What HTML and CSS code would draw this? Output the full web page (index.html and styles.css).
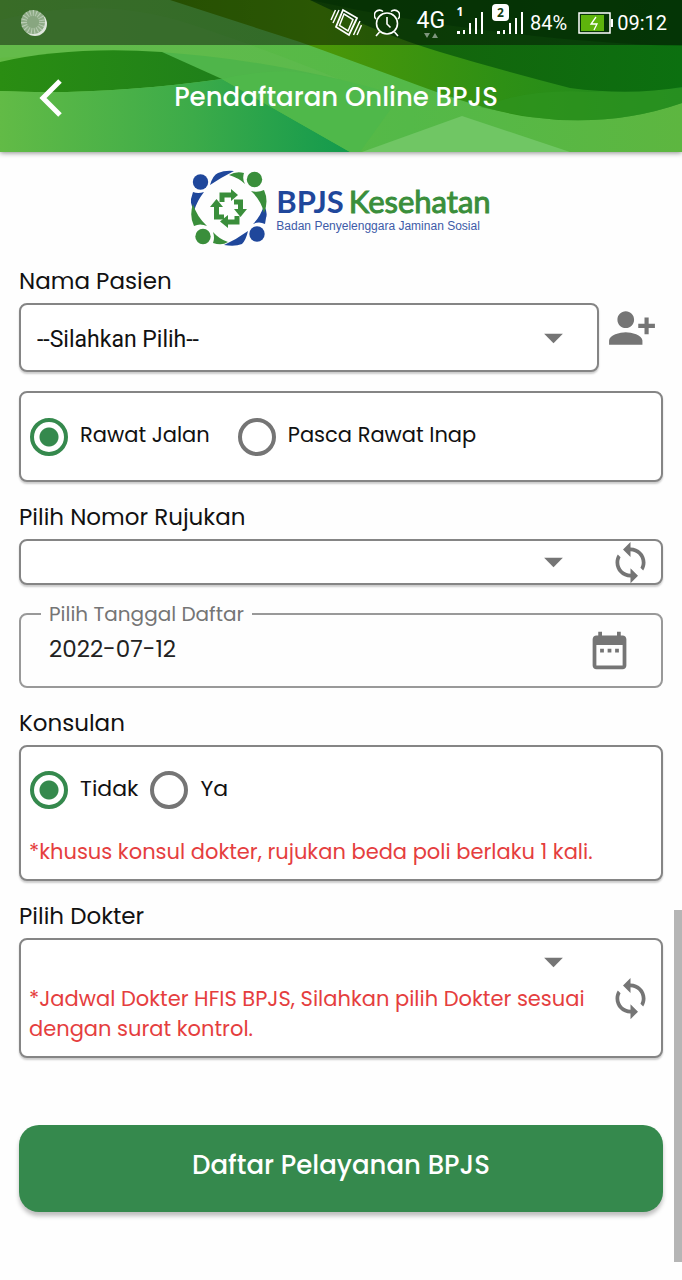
FILE: index.html
```html
<!DOCTYPE html>
<html lang="id">
<head>
<meta charset="utf-8">
<meta name="viewport" content="width=device-width, initial-scale=1">
<title>Pendaftaran Online BPJS</title>
<link rel="stylesheet" href="styles.css">
</head>
<body>
<svg class="sprite" aria-hidden="true">
  <symbol id="i-sync" viewBox="0 0 24 24"><path d="M12 4V1L8 5l4 4V6c3.31 0 6 2.69 6 6 0 1.01-.25 1.97-.7 2.8l1.46 1.46C19.54 15.03 20 13.57 20 12c0-4.42-3.58-8-8-8zm0 14c-3.31 0-6-2.69-6-6 0-1.01.25-1.97.7-2.8L5.24 7.74C4.46 8.97 4 10.43 4 12c0 4.42 3.58 8 8 8v3l4-4-4-4v3z"/></symbol>
  <symbol id="i-down" viewBox="0 0 24 24"><path d="M7 10l5 5 5-5z"/></symbol>
</svg>

<header class="header">
  <svg class="header-art" viewBox="0 0 682 152" preserveAspectRatio="none" aria-hidden="true">
    <defs>
      <linearGradient id="g-base"><stop offset="0" stop-color="#62ba44"/><stop offset=".6" stop-color="#54b948"/><stop offset="1" stop-color="#5db640"/></linearGradient>
      <linearGradient id="g-leaf"><stop offset="0" stop-color="#2a8d12"/><stop offset="1" stop-color="#1f801a"/></linearGradient>
      <linearGradient id="g-low"><stop offset="0" stop-color="#62bb46"/><stop offset=".55" stop-color="#3cab49"/><stop offset="1" stop-color="#139a4d"/></linearGradient>
      <linearGradient id="g-wave"><stop offset="0" stop-color="#438a05"/><stop offset=".3" stop-color="#4a9708"/><stop offset=".65" stop-color="#2e9015"/><stop offset="1" stop-color="#1c8822"/></linearGradient>
      <linearGradient id="g-dark"><stop offset="0" stop-color="#17600a"/><stop offset="1" stop-color="#0c7010"/></linearGradient>
    </defs>
    <rect width="682" height="152" fill="url(#g-base)"/>
    <path d="M0 20Q100-6 190 24T341 80Q250 66 190 58T0 58z" fill="#6cc05a" opacity=".25"/>
    <path d="M160 52Q250 58 341 80L222 79z" fill="#4fb54a"/>
    <path d="M0 62Q70 46 162 52L222 79Q100 96 0 91z" fill="url(#g-leaf)"/>
    <path d="M0 91Q100 96 222 79L350 152H0z" fill="url(#g-low)"/>
    <path d="M222 79Q250 72 285 71Q330 74 400 96L360 152H350z" fill="#4fb84a"/>
    <path d="M170 0L300 42Q350 60 420 86T530 117Q610 128 682 103V0z" fill="url(#g-wave)"/>
    <path d="M480 107Q530 88 590 92L682 88V103Q610 128 530 117z" fill="#2e9420" opacity=".6"/>
    <path d="M310 0Q380 34 440 52T570 88Q630 96 682 87V0z" fill="url(#g-dark)"/>
    <path d="M310 0Q400 20 500 32T682 46V0z" fill="#064d08" opacity=".55"/>
    <path d="M362 152L462 116L570 152z" fill="#70c664"/>
  </svg>
  <div class="status">
    <svg class="ic-sun" viewBox="0 0 28 28" aria-hidden="true"><circle cx="15" cy="15" r="12" fill="#dfe6dc"/><circle cx="13" cy="13" r="12" fill="#8fac87"/><circle cx="13" cy="13" r="9" fill="none" stroke="#b9cbb4" stroke-width="6" stroke-dasharray="1 2"/><circle cx="13" cy="13" r="6" fill="#88a680"/></svg>
    <div class="status-right">
      <svg class="ic-vibrate" viewBox="0 0 32 30" fill="none" stroke="#fff" stroke-width="1.5" aria-hidden="true"><path d="M13 2L27 10L19 27L6 19z" stroke-width="1.8"/><path d="M14 6L23 11.500L18 23L9.500 17.500zM9 2L3 15M5.500 2L1 12M30 13L23.500 27M31.500 17L27 27"/></svg>
      <svg class="ic-alarm" viewBox="0 0 26 28" fill="none" stroke="#fff" stroke-width="1.6" aria-hidden="true"><circle cx="13" cy="14.5" r="10.5"/><path d="M13 8V15L16.500 18.500M5.500 23L2 27M20.500 23L24 27M2 10A4.500 4.500 0 0 1 9 2.500M24 10A4.500 4.500 0 0 0 17 2.500"/></svg>
      <div class="net"><span>4G</span><svg viewBox="0 0 14 6" aria-hidden="true"><path d="M0 1H6L3 6zM8 6H14L11 1z" fill="#7d957d"/></svg></div>
      <div class="sim"><svg viewBox="0 0 28 24" fill="#fff" aria-hidden="true"><path d="M1 20h3v3H1zM7 19h2v4H7zM13 12h2v11h-2zM19 7h2v16h-2zM25 1h2v22h-2z"/></svg><b class="sim-no">1</b></div>
      <div class="sim"><svg viewBox="0 0 28 24" fill="#fff" aria-hidden="true"><path d="M1 20h3v3H1zM7 19h2v4H7zM13 12h2v11h-2zM19 7h2v16h-2zM25 1h2v22h-2z"/></svg><b class="sim-no sim-active">2</b></div>
      <span class="pct">84%</span>
      <svg class="ic-batt" viewBox="0 0 36 22" aria-hidden="true"><path d="M1 1H32V21H1z" fill="none" stroke="#fff" stroke-width="1.5"/><path d="M33 7h2v8h-2z" fill="#fff"/><path d="M3 3H26V19H3z" fill="#5eb40c"/><path d="M18 5L13 12H19L16 18" fill="none" stroke="#fff" stroke-width="1.3"/></svg>
      <span class="clock">09:12</span>
    </div>
  </div>
  <div class="bar">
    <button class="back" type="button" aria-label="Kembali"><svg viewBox="0 0 24 40" aria-hidden="true"><path d="M22 4L5 21L22 38" fill="none" stroke="#fff" stroke-width="5"/></svg></button>
    <h1 class="title">Pendaftaran Online BPJS</h1>
  </div>
</header>

<main class="main">
  <div class="logo">
    <svg class="logo-mark" viewBox="0 0 76 76" aria-hidden="true">
      <g fill="#1f479b">
        <circle cx="9.5" cy="12" r="7.7"/><circle cx="66" cy="64" r="7.7"/>
        <path d="M19 15Q22 5 27 3Q34 0 43 1Q31 7 19 15zM2 22Q7 24 13 22Q6 31 3 41Q-1 33 0 29zM57 61Q55 70 51 74Q44 77 33 75Q46 69 57 61zM74 54Q68 51 62 54Q70 46 73 35Q77 43 75 48z"/>
      </g>
      <g fill="#3a8e3b">
        <circle cx="63.5" cy="9.5" r="7.7"/><circle cx="12" cy="66.5" r="7.7"/>
        <path d="M38 5Q45 1 53 3Q51 9 54 14Q48 8 38 5zM60 21Q67 23 73 20Q78 31 73 43Q70 30 60 21zM37 72Q31 76 22 73Q24 68 22 62Q28 69 37 72zM16 56Q9 53 3 56Q-2 46 2 34Q6 47 16 56z"/>
        <path d="M40 19L47 25L40 31zM43 39H56L49.500 47zM37 45V58L29 51.500zM19 37H32L25.500 29z"/>
      </g>
      <path d="M31 32V25H41M43 32H49.500V40M46 46V52H36M33 47H25.500V36" fill="none" stroke="#3a8e3b" stroke-width="5"/>
    </svg>
    <div class="logo-text">
      <div class="logo-name"><b>BPJS</b><span>Kesehatan</span></div>
      <div class="logo-sub">Badan Penyelenggara Jaminan Sosial</div>
    </div>
  </div>

  <form class="form">
    <div class="field">
      <label class="label" for="pasien">Nama Pasien</label>
      <div class="row">
        <div class="box pick pick-tall">
          <select id="pasien" class="select"><option>--Silahkan Pilih--</option></select>
          <svg class="icon caret" aria-hidden="true"><use href="#i-down"/></svg>
        </div>
        <button class="icon-btn" type="button" aria-label="Tambah pasien"><svg class="icon-lg" viewBox="0 0 24 24" aria-hidden="true"><path d="M13 8c0-2.210-1.790-4-4-4S5 5.790 5 8s1.790 4 4 4 4-1.790 4-4zm2 2v2h3v3h2v-3h3v-2h-3V7h-2v3h-3zM1 18v2h16v-2c0-2.660-5.330-4-8-4s-8 1.340-8 4z"/></svg></button>
      </div>
    </div>

    <div class="box radios radios-visit" role="radiogroup" aria-label="Jenis rawat">
      <label class="radio"><input type="radio" name="rawat" checked><span>Rawat Jalan</span></label>
      <label class="radio"><input type="radio" name="rawat"><span>Pasca Rawat Inap</span></label>
    </div>

    <div class="field">
      <label class="label" for="rujukan">Pilih Nomor Rujukan</label>
      <div class="box pick pick-sync">
        <select id="rujukan" class="select"><option></option></select>
        <svg class="icon caret" aria-hidden="true"><use href="#i-down"/></svg>
        <button class="icon-btn" type="button" aria-label="Muat ulang rujukan"><svg class="icon" aria-hidden="true"><use href="#i-sync"/></svg></button>
      </div>
    </div>

    <fieldset class="date">
      <legend><label for="tanggal">Pilih Tanggal Daftar</label></legend>
      <input id="tanggal" class="date-input" type="text" value="2022-07-12">
      <button class="icon-btn" type="button" aria-label="Pilih tanggal"><svg class="icon" viewBox="0 0 24 24" aria-hidden="true"><path d="M9 11H7v2h2v-2zm4 0h-2v2h2v-2zm4 0h-2v2h2v-2zm2-7h-1V2h-2v2H8V2H6v2H5c-1.110 0-1.990.9-1.990 2L3 20c0 1.100.890 2 2 2h14c1.100 0 2-.9 2-2V6c0-1.100-.9-2-2-2zm0 16H5V9h14v11z"/></svg></button>
    </fieldset>

    <div class="field">
      <span class="label" id="konsulan">Konsulan</span>
      <div class="box konsul">
        <div class="radios" role="radiogroup" aria-labelledby="konsulan">
          <label class="radio"><input type="radio" name="konsul" checked><span>Tidak</span></label>
          <label class="radio"><input type="radio" name="konsul"><span>Ya</span></label>
        </div>
        <p class="note">*khusus konsul dokter, rujukan beda poli berlaku 1 kali.</p>
      </div>
    </div>

    <div class="field">
      <label class="label" for="dokter">Pilih Dokter</label>
      <div class="box dokter">
        <div class="dokter-main">
          <div class="pick">
            <select id="dokter" class="select"><option></option></select>
            <svg class="icon caret" aria-hidden="true"><use href="#i-down"/></svg>
          </div>
          <p class="note">*Jadwal Dokter HFIS BPJS, Silahkan pilih Dokter sesuai dengan surat kontrol.</p>
        </div>
        <button class="icon-btn" type="button" aria-label="Muat ulang dokter"><svg class="icon" aria-hidden="true"><use href="#i-sync"/></svg></button>
      </div>
    </div>

    <button class="submit" type="submit">Daftar Pelayanan BPJS</button>
  </form>
</main>
<div class="scroll-thumb" aria-hidden="true"></div>
</body>
</html>
```

FILE: styles.css
```css
* { box-sizing: border-box; }

body {
  margin: 0;
  min-height: 100vh;
  position: relative;
  background: #fefefe;
  color: #111;
  font-family: Poppins, Inter, "Open Sans", sans-serif;
  font-size: 22px;
}

button, input, select { font: inherit; color: inherit; }

.sprite { display: none; }

/* Header */
.header {
  position: relative;
  color: #fff;
  box-shadow: 0 1px 5px rgba(0, 0, 0, .45);
}
.header-art {
  position: absolute;
  inset: 0;
  width: 100%;
  height: 100%;
}
.status {
  position: relative;
  display: flex;
  align-items: center;
  justify-content: space-between;
  height: 45px;
  padding: 0 15px 0 20px;
  background: rgba(0, 0, 0, .42);
  font-family: Roboto, sans-serif;
  font-size: 20px;
  line-height: 24px;
}
.status-right { display: flex; align-items: center; }
.ic-sun { width: 28px; height: 28px; }
.ic-vibrate { width: 32px; height: 30px; margin-right: 12px; }
.ic-alarm { width: 26px; height: 28px; margin-right: 16px; }
.net {
  display: flex;
  flex-direction: column;
  align-items: center;
  margin-right: 11px;
  padding-top: 2px;
  font-size: 23px;
  line-height: 22px;
}
.net svg { width: 14px; height: 6px; }
.sim { position: relative; height: 24px; margin-right: 12px; }
.sim svg { width: 28px; height: 24px; }
.sim-no {
  position: absolute;
  top: -6px;
  left: 0;
  width: 8px;
  font: bold 12px/14px "Noto Sans", sans-serif;
  text-align: center;
}
.sim-active {
  top: -7px;
  left: -4px;
  width: 17px;
  line-height: 17px;
  border-radius: 4px;
  background: #fff;
  color: #123c10;
}
.sim + .pct { margin-left: -6px; }
.ic-batt { width: 36px; height: 22px; margin: 0 3px 0 11px; }

.bar {
  position: relative;
  display: grid;
  grid-template-columns: 60px 1fr 70px;
  align-items: center;
  height: 107px;
  padding: 0 20px 4px;
}
.back {
  display: flex;
  justify-content: center;
  padding: 0;
  border: 0;
  background: none;
}
.back svg { width: 24px; height: 40px; }
.title {
  margin: 0;
  font-size: 26px;
  font-weight: 500;
  line-height: 40px;
  text-align: center;
  white-space: nowrap;
}

/* Logo */
.main { padding: 18px 19px 64px; }
.logo {
  display: flex;
  justify-content: center;
  align-items: center;
  gap: 9px;
  margin-bottom: 19px;
}
.logo-mark { width: 76px; height: 76px; }
.logo-name {
  display: flex;
  gap: 5px;
  font-family: Lato, sans-serif;
  font-size: 31px;
  line-height: 36px;
  color: #3a8e3b;
}
.logo-name span { -webkit-text-stroke: 1px #3a8e3b; }
.logo-name b { color: #1f479b; }
.logo-sub {
  font: 12px/14px "Liberation Sans", sans-serif;
  color: #3d5ba8;
  white-space: nowrap;
}

/* Form */
.form { display: flex; flex-direction: column; gap: 19px; }
.field { display: flex; flex-direction: column; gap: 5px; }
.label { font-size: 23px; line-height: 33px; }
.row { display: flex; align-items: flex-start; gap: 8px; }
.row > .box { flex: 1; }
.row > .icon-btn { width: 56px; height: 50px; justify-content: flex-start; }
.box {
  border: 2px solid #858585;
  border-radius: 8px;
  background: #fff;
  box-shadow: 0 2px 2px rgba(0, 0, 0, .2);
}
.icon { width: 45px; height: 45px; flex: none; fill: #757575; }
.icon-lg { width: 50px; height: 50px; flex: none; fill: #757575; }
.icon-btn {
  display: flex;
  align-items: center;
  justify-content: center;
  flex: none;
  width: 45px;
  padding: 0;
  border: 0;
  background: none;
}

.pick { position: relative; display: flex; align-items: center; }
.pick-tall { height: 69px; }
.pick-sync { height: 46px; padding-right: 8px; }
.pick-sync .icon-btn { height: 42px; }
.select {
  flex: 1;
  align-self: stretch;
  min-width: 0;
  padding: 4px 70px 0 16px;
  border: 0;
  background: none;
  appearance: none;
  font-family: Roboto, sans-serif;
  font-size: 23px;
}
.caret {
  position: absolute;
  top: 50%;
  right: 21px;
  margin-top: -23px;
  pointer-events: none;
}
.pick-sync .caret { right: 85px; }

.radios { display: flex; align-items: center; gap: 12px; }
.radios-visit { height: 91px; padding-left: 9px; gap: 28px; font-size: 21px; }
.radio { display: flex; align-items: center; gap: 12px; }
.radio span { padding-bottom: 4px; }
.radio input {
  appearance: none;
  width: 38px;
  height: 38px;
  margin: 0;
  border: 4px solid #757575;
  border-radius: 50%;
}
.radio input:checked {
  border-color: #35894d;
  background: radial-gradient(circle, #35894d 9px, transparent 10px);
}

.date {
  display: flex;
  align-items: center;
  min-width: 0;
  height: 84px;
  margin: 0;
  padding: 4px 29px 0 20px;
  border: 2px solid #999;
  border-radius: 8px;
}
.date legend {
  padding: 0 8px;
  font-size: 20px;
  line-height: 20px;
  color: #757575;
}
.date-input {
  flex: 1;
  min-width: 0;
  padding: 0 8px 4px;
  border: 0;
  background: none;
  color: #222;
  font-size: 23px;
}

.konsul { padding: 24px 8px 12px; }
.note {
  margin: 0;
  font-size: 21px;
  line-height: 30px;
  color: #e53e3e;
}
.konsul .note { margin-top: 28px; }
.konsul .radio:first-child { padding-left: 1px; }

.dokter {
  display: flex;
  align-items: center;
  gap: 16px;
  padding-right: 8px;
}
.dokter-main { flex: 1; padding: 0 0 12px 8px; }
.dokter .pick { height: 44px; }
.dokter .caret { right: 16px; }

.submit {
  height: 87px;
  margin-top: 48px;
  padding: 0 0 6px;
  border: 0;
  border-radius: 20px;
  background: #35894d;
  box-shadow: 0 4px 4px rgba(0, 0, 0, .25);
  color: #fff;
  font-size: 26px;
  font-weight: 500;
}

.scroll-thumb {
  position: absolute;
  right: 0;
  bottom: 18px;
  width: 8px;
  height: 352px;
  background: #b5b5b5;
}
```
